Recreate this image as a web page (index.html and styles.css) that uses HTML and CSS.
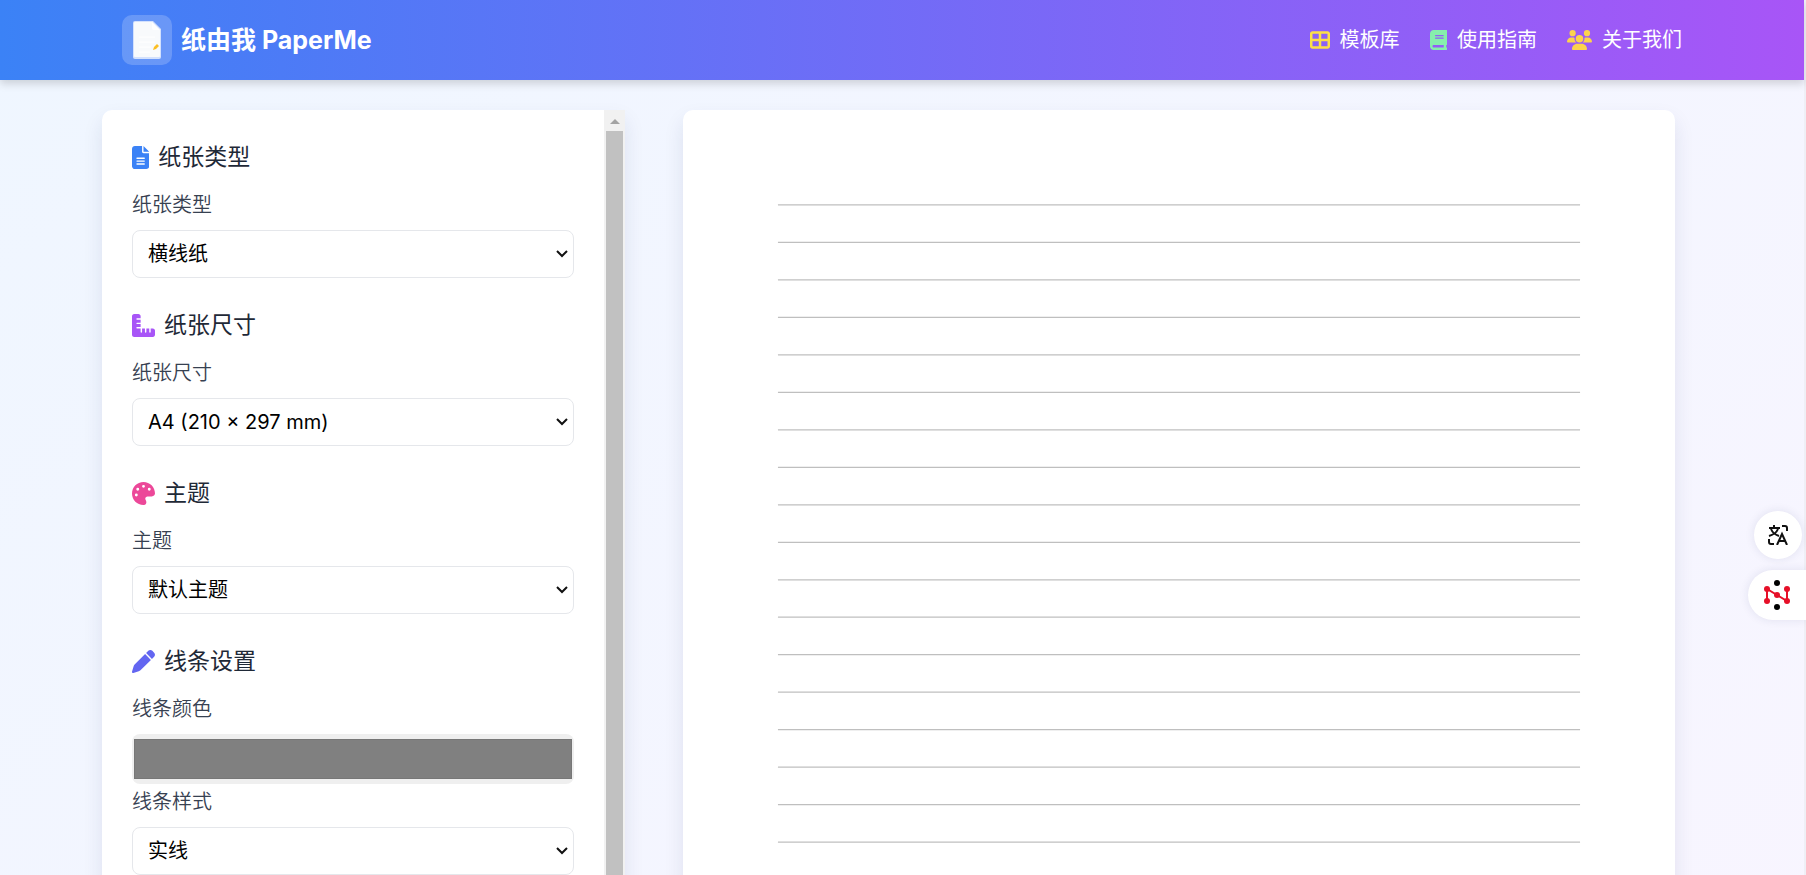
FILE: index.html
```html
<!DOCTYPE html>
<html lang="zh-CN">
<head>
    <meta charset="UTF-8">
    <meta name="viewport" content="width=device-width, initial-scale=1.0">
    <title>纸由我 PaperMe</title>
    <link rel="stylesheet" href="styles.css">
</head>
<body>
    <div class="page">
        <header class="header">
            <div class="header-inner">
                <a href="#" class="brand">
                    <span class="brand-logo">
                        <svg width="28" height="38" viewBox="0 0 28 38">
                            <path d="M2 0H20L28 8V36a2 2 0 0 1-2 2H2a2 2 0 0 1-2-2V2a2 2 0 0 1 2-2z" fill="#d3e1fd"/>
                            <path d="M2 1H19L27 9V35a1 1 0 0 1-1 1H2a1 1 0 0 1-1-1V2a1 1 0 0 1 1-1z" fill="#f8fafc"/>
                            <path d="M19 1v6a2 2 0 0 0 2 2h6z" fill="#fff"/>
                            <path d="M6 16H22M6 21H22M6 26H18M6 31H17" stroke="#fff" stroke-width="1"/>
                            <path d="M20 29l1-3 3-3 2 2-3 3z" fill="#fbbf24"/>
                        </svg>
                    </span>
                    <span class="brand-name">纸由我 PaperMe</span>
                </a>
                <nav class="nav">
                    <a href="#templates">
                        <svg class="icon yellow" viewBox="0 0 512 512"><path d="M448 96V224H288V96H448zm0 192V416H288V288H448zM224 224H64V96H224V224zM64 288H224V416H64V288zM64 32C28.7 32 0 60.7 0 96V416c0 35.3 28.7 64 64 64H448c35.3 0 64-28.7 64-64V96c0-35.3-28.7-64-64-64H64z"/></svg>
                        模板库
                    </a>
                    <a href="#guide">
                        <svg class="icon green" viewBox="0 0 448 512"><path d="M96 0C43 0 0 43 0 96V416c0 53 43 96 96 96H384h32c17.7 0 32-14.3 32-32s-14.3-32-32-32V384c17.7 0 32-14.3 32-32V32c0-17.7-14.3-32-32-32H384 96zm0 384H352v64H96c-17.7 0-32-14.3-32-32s14.3-32 32-32zm32-240c0-8.8 7.2-16 16-16H336c8.8 0 16 7.2 16 16s-7.2 16-16 16H144c-8.8 0-16-7.2-16-16zm16 48H336c8.8 0 16 7.2 16 16s-7.2 16-16 16H144c-8.8 0-16-7.2-16-16s7.2-16 16-16z"/></svg>
                        使用指南
                    </a>
                    <a href="#about">
                        <svg class="icon amber" viewBox="0 0 640 512"><path d="M144 0a80 80 0 1 1 0 160A80 80 0 1 1 144 0zM512 0a80 80 0 1 1 0 160A80 80 0 1 1 512 0zM0 298.7C0 239.8 47.8 192 106.7 192h42.7c15.9 0 31 3.5 44.6 9.7c-1.3 7.2-1.9 14.7-1.9 22.3c0 38.2 16.8 72.5 43.3 96c-.2 0-.4 0-.7 0H21.3C9.6 320 0 310.4 0 298.7zM405.3 320c-.2 0-.4 0-.7 0c26.6-23.5 43.3-57.8 43.3-96c0-7.6-.7-15-1.9-22.3c13.6-6.3 28.7-9.7 44.6-9.7h42.7C592.2 192 640 239.8 640 298.7c0 11.8-9.6 21.3-21.3 21.3H405.3zM224 224a96 96 0 1 1 192 0 96 96 0 1 1 -192 0zM128 485.3C128 411.7 187.7 352 261.3 352H378.7C452.3 352 512 411.7 512 485.3c0 14.7-11.9 26.7-26.7 26.7H154.7c-14.7 0-26.7-11.9-26.7-26.7z"/></svg>
                        关于我们
                    </a>
                </nav>
            </div>
        </header>

        <main class="main">
            <aside class="panel">
                <form class="settings">
                    <section class="group">
                        <h2>
                            <svg class="icon blue" viewBox="0 0 384 512"><path d="M64 0C28.7 0 0 28.7 0 64V448c0 35.3 28.7 64 64 64H320c35.3 0 64-28.7 64-64V160H256c-17.7 0-32-14.3-32-32V0H64zM256 0V128H384L256 0zM112 256H272c8.8 0 16 7.2 16 16s-7.2 16-16 16H112c-8.8 0-16-7.2-16-16s7.2-16 16-16zm0 64H272c8.8 0 16 7.2 16 16s-7.2 16-16 16H112c-8.8 0-16-7.2-16-16s7.2-16 16-16zm0 64H272c8.8 0 16 7.2 16 16s-7.2 16-16 16H112c-8.8 0-16-7.2-16-16s7.2-16 16-16z"/></svg>
                            纸张类型
                        </h2>
                        <label for="paper-type">纸张类型</label>
                        <div class="select">
                            <select id="paper-type">
                                <option>横线纸</option>
                            </select>
                            <svg class="chevron" viewBox="0 0 12 8"><path d="M1 1l5 5 5-5"/></svg>
                        </div>
                    </section>

                    <section class="group">
                        <h2>
                            <svg class="icon purple" viewBox="0 0 512 512"><path d="M.2 468.9C2.7 493.1 23.1 512 48 512l96 0 320 0c26.5 0 48-21.5 48-48l0-96c0-26.5-21.5-48-48-48l-48 0 0 80c0 8.8-7.2 16-16 16s-16-7.2-16-16l0-80-64 0 0 80c0 8.8-7.2 16-16 16s-16-7.2-16-16l0-80-64 0 0 80c0 8.8-7.2 16-16 16s-16-7.2-16-16l0-80-80 0c-8.8 0-16-7.2-16-16s7.2-16 16-16l80 0 0-64-80 0c-8.8 0-16-7.2-16-16s7.2-16 16-16l80 0 0-64-80 0c-8.8 0-16-7.2-16-16s7.2-16 16-16l80 0 0-48c0-26.5-21.5-48-48-48L48 0C21.5 0 0 21.5 0 48L0 368l0 96c0 1.7 .1 3.3 .2 4.9z"/></svg>
                            纸张尺寸
                        </h2>
                        <label for="paper-size">纸张尺寸</label>
                        <div class="select">
                            <select id="paper-size">
                                <option>A4 (210 × 297 mm)</option>
                            </select>
                            <svg class="chevron" viewBox="0 0 12 8"><path d="M1 1l5 5 5-5"/></svg>
                        </div>
                    </section>

                    <section class="group">
                        <h2>
                            <svg class="icon pink" viewBox="0 0 512 512"><path d="M512 256c0 .9 0 1.8 0 2.7c-.4 36.5-33.6 61.3-70.1 61.3L344 320c-26.5 0-48 21.5-48 48c0 3.4 .4 6.7 1 9.9c2.1 10.2 6.5 20 10.8 29.9c6.1 13.8 12.1 27.5 12.1 42c0 31.8-21.6 60.7-53.4 62c-3.5 .1-7 .2-10.6 .2C114.6 512 0 397.4 0 256S114.6 0 256 0S512 114.6 512 256zM128 288a32 32 0 1 0 -64 0 32 32 0 1 0 64 0zm0-96a32 32 0 1 0 0-64 32 32 0 1 0 0 64zM288 96a32 32 0 1 0 -64 0 32 32 0 1 0 64 0zm96 96a32 32 0 1 0 0-64 32 32 0 1 0 0 64z"/></svg>
                            主题
                        </h2>
                        <label for="theme">主题</label>
                        <div class="select">
                            <select id="theme">
                                <option>默认主题</option>
                            </select>
                            <svg class="chevron" viewBox="0 0 12 8"><path d="M1 1l5 5 5-5"/></svg>
                        </div>
                    </section>

                    <section class="group">
                        <h2>
                            <svg class="icon indigo" viewBox="0 0 512 512"><path d="M362.7 19.3L314.3 67.7 444.3 197.7l48.4-48.4c25-25 25-65.5 0-90.5L453.3 19.3c-25-25-65.5-25-90.5 0zm-71 71L58.6 323.5c-10.4 10.4-18 23.3-22.2 37.4L1 481.2C-1.5 489.7 .8 498.8 7 505s15.3 8.5 23.7 6.1l120.3-35.4c14.1-4.2 27-11.8 37.4-22.2L421.7 220.3 291.7 90.3z"/></svg>
                            线条设置
                        </h2>
                        <label for="line-color">线条颜色</label>
                        <input type="color" id="line-color" value="#808080">
                        <label for="line-style">线条样式</label>
                        <div class="select">
                            <select id="line-style">
                                <option>实线</option>
                            </select>
                            <svg class="chevron" viewBox="0 0 12 8"><path d="M1 1l5 5 5-5"/></svg>
                        </div>
                    </section>
                </form>
                <div class="scrollbar">
                    <div class="scroll-up"></div>
                    <div class="scroll-thumb"></div>
                </div>
            </aside>

            <div class="preview">
                <!-- A4 at 96dpi, 20mm margins -->
                <svg class="paper" viewBox="0 0 794 1123">
                    <g id="paper-lines"></g>
                </svg>
            </div>
        </main>
    </div>

    <div class="floating">
        <button type="button" class="float-translate" aria-label="翻译">
            <svg width="20" height="20" viewBox="0 0 20 20" fill="none" stroke="#111" stroke-width="2">
                <path d="M1 3H12M6 0V3M3 4Q5 9 11 11M10 4Q8 9 1 11"/>
                <path d="M14 1H17Q19 1 19 3V6M1 14V17Q1 19 3 19H6"/>
                <path d="M9 20L14 9L19 20M11 16H17"/>
            </svg>
        </button>
        <button type="button" class="float-network" aria-label="工具">
            <svg width="28" height="30" viewBox="0 0 28 30">
                <path d="M4 21V9L24 21V9" fill="none" stroke="#e60f28" stroke-width="2"/>
                <g fill="#e60f28">
                    <circle cx="4" cy="9" r="3"/>
                    <circle cx="4" cy="21" r="3"/>
                    <circle cx="14" cy="15" r="3"/>
                    <circle cx="24" cy="9" r="3"/>
                    <circle cx="24" cy="21" r="3"/>
                </g>
                <circle cx="14" cy="3" r="3"/>
                <circle cx="14" cy="27" r="3"/>
            </svg>
        </button>
    </div>

    <script>
        const MARGIN = 76;
        const SPACING = 30;
        const lines = document.getElementById('paper-lines');

        for (let y = MARGIN; y <= 1123 - MARGIN; y += SPACING) {
            const line = document.createElementNS('http://www.w3.org/2000/svg', 'line');
            line.setAttribute('x1', MARGIN);
            line.setAttribute('x2', 794 - MARGIN);
            line.setAttribute('y1', y);
            line.setAttribute('y2', y);
            lines.appendChild(line);
        }
    </script>
</body>
</html>
```
FILE: styles.css
```css
* {
    box-sizing: border-box;
}
body {
    margin: 0;
    height: 100vh;
    overflow: hidden;
    font-family: Inter, "Noto Sans CJK SC", sans-serif;
    font-size: 20px;
    line-height: 30px;
    color: #1f2937;
}
.page {
    padding-bottom: 30px;
    background: linear-gradient(to bottom right, #eff6ff, #faf5ff);
    border-right: 2px solid #efeff6;
}
.icon {
    height: 20px;
    fill: currentColor;
}
.yellow { color: #fde047; }
.green { color: #86efac; }
.amber { color: #fcd34d; }
.blue { color: #3b82f6; }
.purple { color: #a855f7; }
.pink { color: #ec4899; }
.indigo { color: #6366f1; }

.header {
    background: linear-gradient(to right, #3b82f6, #a855f7);
    box-shadow: 0 4px 8px rgba(0,0,0,0.15);
}
.header-inner {
    max-width: 1600px;
    margin: 0 auto;
    padding: 15px 20px;
    display: flex;
    align-items: center;
    justify-content: space-between;
}
.brand {
    display: flex;
    align-items: center;
    gap: 9px;
    color: white;
    text-decoration: none;
}
.brand-logo {
    width: 50px;
    height: 50px;
    border-radius: 10px;
    background: rgba(255,255,255,0.2);
    display: flex;
    align-items: center;
    justify-content: center;
}
.brand-name {
    font-size: 25px;
    font-weight: 700;
}
.nav {
    display: flex;
    gap: 30px;
}
.nav a {
    display: flex;
    align-items: center;
    gap: 10px;
    color: white;
    text-decoration: none;
}

.main {
    max-width: 1600px;
    margin: 0 auto;
    padding-top: 30px;
    display: grid;
    grid-template-columns: 1fr 2fr;
    gap: 30px;
}
.panel {
    display: flex;
    background: white;
    border-radius: 10px 0 0 10px;
    box-shadow: 0 10px 20px rgba(30,41,100,0.1);
}
.settings {
    flex: 1;
    padding: 30px;
}
.group {
    margin-bottom: 30px;
}
.group h2 {
    display: flex;
    align-items: center;
    gap: 9px;
    margin: 0 0 15px;
    font-size: 23px;
    font-weight: 400;
    line-height: 35px;
}
.group h2 .icon {
    height: 23px;
}
.group label {
    display: block;
    margin-bottom: 10px;
    font-weight: 350;
    color: #374151;
}
.select {
    position: relative;
}
.select select {
    display: block;
    width: 100%;
    height: 48px;
    padding: 0 15px;
    border: 1px solid #e5e7eb;
    border-radius: 8px;
    background: white;
    color: black;
    font: inherit;
    appearance: none;
}
.chevron {
    position: absolute;
    right: 6px;
    top: 20px;
    width: 12px;
    height: 8px;
    fill: none;
    stroke: #111;
    stroke-width: 2;
    pointer-events: none;
}
.group input[type="color"] {
    display: block;
    width: 100%;
    height: 50px;
    margin-bottom: 3px;
    padding: 5px 2px;
    border: none;
    border-radius: 8px;
    background: #efefef;
    appearance: none;
}
.group input[type="color"]::-webkit-color-swatch-wrapper {
    padding: 0;
}
.group input[type="color"]::-webkit-color-swatch {
    border: 1px solid #777;
}

.scrollbar {
    width: 21px;
    padding: 0 2px;
    display: flex;
    flex-direction: column;
    align-items: center;
    background: #f1f1f1;
}
.scroll-up {
    margin: 9px 0 7px;
    border: 5px solid transparent;
    border-top: none;
    border-bottom-color: #a3a3a3;
}
.scroll-thumb {
    flex: 1;
    width: 100%;
    background: #c1c1c1;
}

.preview {
    display: flex;
    justify-content: center;
    align-items: flex-start;
}
.paper {
    width: 100%;
    max-width: 992px;
    background: white;
    border-radius: 10px;
    box-shadow: 0 10px 20px rgba(30,41,100,0.1);
}
.paper line {
    stroke: #808080;
    stroke-opacity: 0.5;
    stroke-width: 1;
}

.floating {
    position: fixed;
    right: 0;
    top: 511px;
    display: flex;
    flex-direction: column;
    align-items: flex-end;
    gap: 11px;
}
.floating button {
    display: flex;
    align-items: center;
    justify-content: center;
    padding: 0;
    border: none;
    background: white;
    box-shadow: 0 0 10px rgba(30,41,100,0.1);
    cursor: pointer;
}
.float-translate {
    width: 48px;
    height: 48px;
    margin-right: 4px;
    border-radius: 50%;
}
.float-network {
    width: 58px;
    height: 50px;
    border-radius: 25px 0 0 25px;
}
```
